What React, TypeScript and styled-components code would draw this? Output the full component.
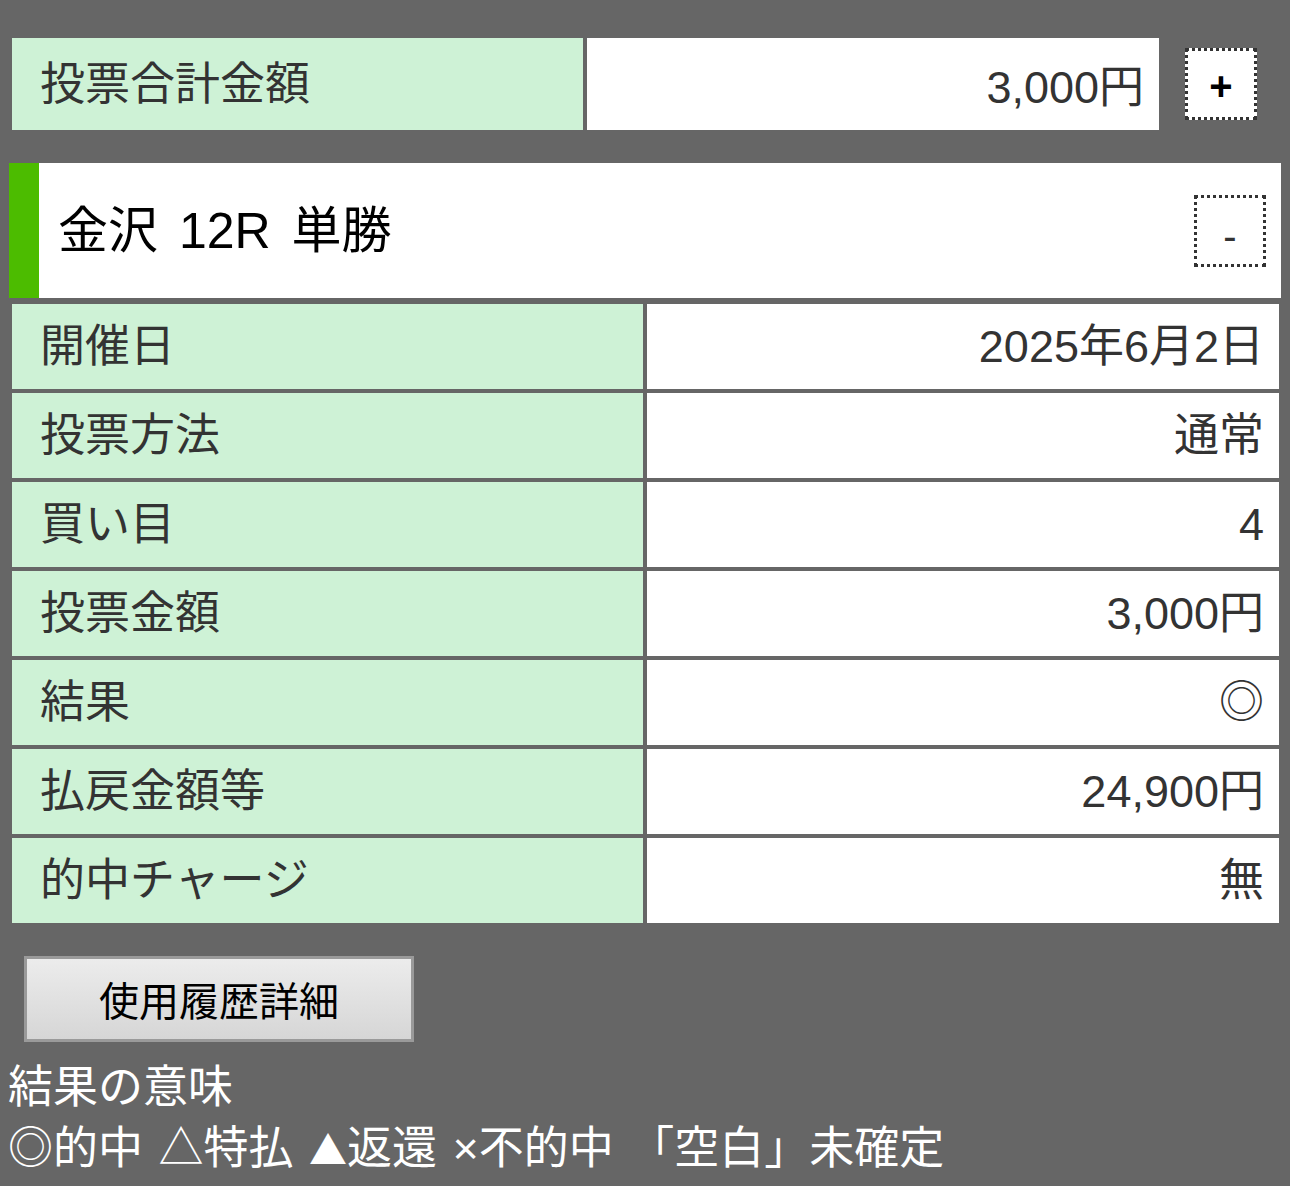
import React from "react";
import styled, { createGlobalStyle } from "styled-components";

const GlobalStyle = createGlobalStyle`
  html, body {
    background: #666666;
  }
  body {
    margin: 8px;
    font-family: "Liberation Sans", "Noto Sans CJK JP", sans-serif;
    color: #333333;
  }
  * { box-sizing: border-box; }
`;

const Page = styled.div`
  display: flex;
  flex-direction: column;
  width: 1274px;
`;

const TotalRow = styled.div`
  display: flex;
  align-items: center;
  margin-top: 30px;
  padding-left: 4px;
`;

const TotalGrid = styled.div`
  display: grid;
  grid-template-columns: 571px 572px;
  column-gap: 4px;
  height: 92px;
`;

const Cell = styled.div<{ $label?: boolean; $align?: "left" | "right"; $shift?: number }>`
  display: flex;
  align-items: center;
  justify-content: ${(p) => (p.$align === "right" ? "flex-end" : "flex-start")};
  background: ${(p) => (p.$label ? "#cef2d6" : "#ffffff")};
  color: #333333;
  font-size: 45px;
  line-height: 1;
  padding: ${(p) => p.$shift ?? 0}px 15px 0 28px;
  white-space: nowrap;
`;

const ToggleButton = styled.div<{ $ml: number }>`
  display: flex;
  align-items: center;
  justify-content: center;
  width: 72px;
  height: 72px;
  margin-left: ${(p) => p.$ml}px;
  background: #ffffff;
  border: 3px dotted #333333;
  font-family: "Liberation Sans", sans-serif;
  font-size: 40px;
  line-height: 1;
`;

const PlusGlyph = styled.span`
  color: #000000;
  font-weight: bold;
  margin-top: 3px;
`;

const MinusGlyph = styled.span`
  color: #333333;
  margin-top: 10px;
`;

const RaceHeader = styled.div`
  display: flex;
  align-items: center;
  justify-content: space-between;
  margin: 33px 1px 0 1px;
  height: 135px;
  background: #ffffff;
  border-left: 30px solid #4cbc00;
  padding: 0 15px 0 19px;
`;

const RaceTitle = styled.h2`
  margin: 0;
  font-weight: normal;
  font-size: 50px;
  line-height: 1;
  word-spacing: 7px;
  color: #000000;
`;

const DetailGrid = styled.div`
  display: grid;
  grid-template-columns: 631px 632px;
  grid-auto-rows: 85px;
  gap: 4px;
  margin-top: 6px;
  padding-left: 4px;
`;

const HistoryButton = styled.button`
  margin: 33px 0 0 16px;
  width: 390px;
  height: 86px;
  border: 3px solid #9a9a9a;
  background: linear-gradient(#ececec, #d6d6d6);
  font-family: "Liberation Sans", "Noto Sans CJK JP", sans-serif;
  font-size: 40px;
  color: #000000;
  padding: 0;
`;

const Legend = styled.div`
  margin-top: 16px;
  color: #ffffff;
  font-size: 45px;
  line-height: 60px;
  white-space: nowrap;
`;

const LegendLine = styled.div<{ $spread?: boolean }>`
  word-spacing: ${(p) => (p.$spread ? "3px" : "0")};
`;

const Mark = styled.span`
  font-family: "Noto Sans CJK JP", sans-serif;
  font-size: 38px;
`;

const rows: [string, string][] = [
  ["開催日", "2025年6月2日"],
  ["投票方法", "通常"],
  ["買い目", "4"],
  ["投票金額", "3,000円"],
  ["結果", "◎"],
  ["払戻金額等", "24,900円"],
  ["的中チャージ", "無"],
];

export default function App() {
  return (
    <>
      <GlobalStyle />
      <Page>
        <TotalRow>
          <TotalGrid>
            <Cell $label>投票合計金額</Cell>
            <Cell $align="right" $shift={6}>3,000円</Cell>
          </TotalGrid>
          <ToggleButton $ml={26}>
            <PlusGlyph>+</PlusGlyph>
          </ToggleButton>
        </TotalRow>

        <RaceHeader>
          <RaceTitle>金沢 12R 単勝</RaceTitle>
          <ToggleButton $ml={0}>
            <MinusGlyph>-</MinusGlyph>
          </ToggleButton>
        </RaceHeader>

        <DetailGrid>
          {rows.map(([label, value]) => (
            <React.Fragment key={label}>
              <Cell $label>{label}</Cell>
              <Cell $align="right">{value}</Cell>
            </React.Fragment>
          ))}
        </DetailGrid>

        <div>
          <HistoryButton>使用履歴詳細</HistoryButton>
        </div>

        <Legend>
          <LegendLine>結果の意味</LegendLine>
          <LegendLine $spread>
            ◎的中 △特払 <Mark>▲</Mark>返還 ×不的中 「空白」未確定
          </LegendLine>
        </Legend>
      </Page>
    </>
  );
}
